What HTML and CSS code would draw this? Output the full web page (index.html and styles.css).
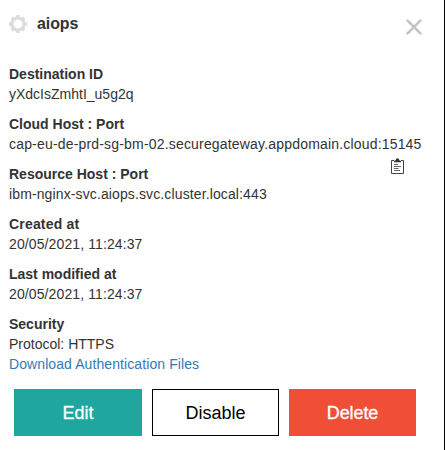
FILE: index.html
```html
<!DOCTYPE html>
<html lang="en">
<head>
<meta charset="utf-8">
<title>aiops</title>
<link rel="stylesheet" href="styles.css">
</head>
<body>
<main class="panel">
  <header class="header">
    <svg class="gear" viewBox="0 0 18 18" aria-hidden="true">
      <circle cx="9" cy="9" r="6" fill="none" stroke="#d9dcde" stroke-width="3"/>
      <g fill="#d9dcde">
        <path id="teeth" d="M7 2.8 7.6 0h2.8l.6 2.8zM7 15.2l.6 2.8h2.8l.6-2.8z"/>
        <use href="#teeth" transform="rotate(45 9 9)"/>
        <use href="#teeth" transform="rotate(90 9 9)"/>
        <use href="#teeth" transform="rotate(135 9 9)"/>
      </g>
    </svg>
    <h1 class="title">aiops</h1>
    <svg class="close" viewBox="0 0 16 16" role="img" aria-label="Close">
      <path d="M1.6 1.6l12.8 12.8M14.4 1.6L1.6 14.4" fill="none" stroke="#c4c4c4" stroke-width="2.7" stroke-linecap="round"/>
    </svg>
  </header>
  <dl class="details">
    <div class="item"><dt>Destination ID</dt><dd>yXdcIsZmhtI_u5g2q</dd></div>
    <div class="item">
      <dt>Cloud Host : Port</dt><dd class="cloud-host">cap-eu-de-prd-sg-bm-02.securegateway.appdomain.cloud:15145</dd>
      <svg class="copy" viewBox="0 0 13 16" role="img" aria-label="Copy">
        <path d="M3 2.5H.5v13h12v-13H10" fill="none" stroke="#444" stroke-width="1"/>
        <path d="M3 4.3V3l1.7-.7C4.9 1 5.5.2 6.5.2s1.6.8 1.8 2.1L10 3v1.3z" fill="#333"/>
        <path d="M3 6.5h4M3 8.5h7M3 10.5h4.5M3 12.5h6" stroke="#555" stroke-width=".9"/>
      </svg>
    </div>
    <div class="item"><dt>Resource Host : Port</dt><dd class="resource-host">ibm-nginx-svc.aiops.svc.cluster.local:443</dd></div>
    <div class="item"><dt class="created">Created at</dt><dd class="date">20/05/2021, 11:24:37</dd></div>
    <div class="item"><dt>Last modified at</dt><dd class="date">20/05/2021, 11:24:37</dd></div>
    <div class="item"><dt>Security</dt><dd>Protocol: HTTPS</dd><dd><a class="link">Download Authentication Files</a></dd></div>
  </dl>
  <div class="actions">
    <button class="button edit">Edit</button>
    <button class="button disable">Disable</button>
    <button class="button delete">Delete</button>
  </div>
</main>
</body>
</html>
```
FILE: styles.css
```css
* { box-sizing: border-box; }
body {
  margin: 0;
  background: #fff;
  color: #333;
  font: 14px/20px "Liberation Sans", Arial, sans-serif;
}
.panel {
  height: 450px;
  padding: 14px 0 0 9px;
  border-right: 1px solid #000;
  overflow: hidden;
}
.header {
  display: flex;
  align-items: flex-start;
  height: 50px;
}
.gear { width: 18px; height: 18px; margin-top: 1px; }
.title { margin: 0 0 0 10px; font-size: 16px; line-height: 20px; letter-spacing: -0.1px; }
.close { width: 16px; height: 16px; margin: 5px 22px 0 auto; }
.details {
  display: flex;
  flex-direction: column;
  gap: 10px;
  margin: 0;
}
.item { position: relative; white-space: nowrap; }
dt { font-weight: bold; }
dd { margin: 0; }
.cloud-host { letter-spacing: 0.18px; }
.resource-host { letter-spacing: 0.12px; }
.created { letter-spacing: 0.18px; }
.date { letter-spacing: 0.11px; }
.copy {
  position: absolute;
  top: 44px;
  left: 382px;
  width: 13px;
  height: 16px;
}
.link { color: #337ab7; letter-spacing: 0.09px; }
.actions {
  display: grid;
  grid-template-columns: 128px 127px 127px;
  gap: 10px;
  margin: 15px 0 0 5px;
}
.button {
  height: 47px;
  padding: 0;
  border: 0;
  border-radius: 0;
  font: 18px/20px "Liberation Sans", Arial, sans-serif;
  color: #fff;
}
.edit { background: #1ea69f; -webkit-text-stroke: 0.3px; }
.disable { background: #fff; color: #000; border: 1px solid #000; }
.delete { background: #f04e37; -webkit-text-stroke: 0.3px; letter-spacing: -0.1px; }
```
